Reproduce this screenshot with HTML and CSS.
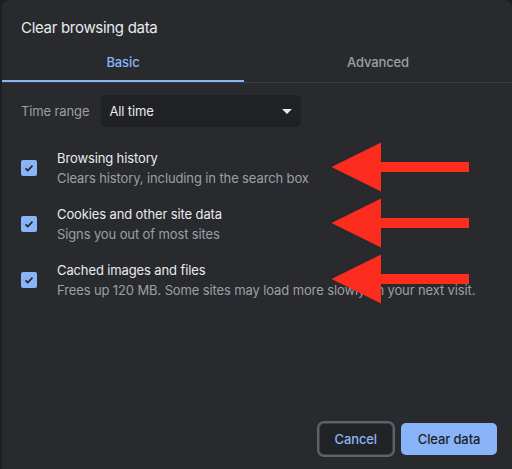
FILE: index.html
```html
<!DOCTYPE html>
<html lang="en">
<head>
    <meta charset="UTF-8">
    <meta name="viewport" content="width=device-width, initial-scale=1.0">
    <title>Clear browsing data</title>
    <link rel="stylesheet" href="styles.css">
</head>
<body>

<div class="dialog">
    <h1 class="dialog-title">Clear browsing data</h1>

    <!-- tabs -->
    <div class="tabs">
        <div class="tab active">Basic</div>
        <div class="tab">Advanced</div>
    </div>

    <!-- time range -->
    <div class="range-row">
        <span class="range-label">Time range</span>
        <div class="select">
            <span>All time</span>
            <span class="select-arrow"></span>
        </div>
    </div>

    <!-- data types -->
    <div class="options">
        <div class="option">
            <span class="checkbox">
                <svg width="16" height="16" viewBox="0 0 16 16"><path d="M4.5 8.3l2.3 2.2 4.7-4.9" fill="none" stroke="#202124" stroke-width="1.6"/></svg>
            </span>
            <div class="option-text">
                <div class="option-title">Browsing history</div>
                <div class="option-desc">Clears history, including in the search box</div>
            </div>
        </div>
        <div class="option">
            <span class="checkbox">
                <svg width="16" height="16" viewBox="0 0 16 16"><path d="M4.5 8.3l2.3 2.2 4.7-4.9" fill="none" stroke="#202124" stroke-width="1.6"/></svg>
            </span>
            <div class="option-text">
                <div class="option-title">Cookies and other site data</div>
                <div class="option-desc">Signs you out of most sites</div>
            </div>
        </div>
        <div class="option">
            <span class="checkbox">
                <svg width="16" height="16" viewBox="0 0 16 16"><path d="M4.5 8.3l2.3 2.2 4.7-4.9" fill="none" stroke="#202124" stroke-width="1.6"/></svg>
            </span>
            <div class="option-text">
                <div class="option-title">Cached images and files</div>
                <div class="option-desc">Frees up 120 MB. Some sites may load more slowly on your next visit.</div>
            </div>
        </div>
    </div>

    <div class="actions">
        <button class="btn btn-cancel">Cancel</button>
        <button class="btn btn-clear">Clear data</button>
    </div>

    <!-- red arrows pointing at the options -->
    <svg class="arrows" width="512" height="469" viewBox="0 0 512 469">
        <path d="M331.5 167L381 142.5V162H469V172H381V191.5Z" fill="#fc2c1e"/>
        <path d="M331.5 223L381 198.5V218H469V228H381V247.5Z" fill="#fc2c1e"/>
        <path d="M331.5 279L381 254.5V274H469V284H381V303.5Z" fill="#fc2c1e"/>
    </svg>
</div>

</body>
</html>
```

FILE: styles.css
```css
body {
    margin: 0;
    padding: 0;
    background-color: #1d1e21;
    font-family: Inter, "Noto Sans", sans-serif;
    font-size: 13px;
    letter-spacing: -0.12px;
    color: #e8eaed;
}

.dialog {
    position: relative;
    width: 510px;
    height: 469px;
    margin-left: 2px;
    background-color: #292a2d;
    border-radius: 8px 8px 0 0;
    display: flex;
    flex-direction: column;
}

.dialog-title {
    margin: 18px 0 0 19px;
    font-size: 15px;
    font-weight: 400;
    line-height: 20px;
    letter-spacing: -0.3px;
}

.tabs {
    display: flex;
    margin-top: 6px;
    border-bottom: 1px solid #3c3d40;
}

.tab {
    height: 36px;
    line-height: 36px;
    text-align: center;
    font-weight: 500;
    color: #9aa0a6;
    border-bottom: 2px solid transparent;
}

.tab.active {
    width: 242px;
    color: #8ab4f8;
    border-bottom-color: #8ab4f8;
}

.tab:last-child {
    flex: 1;
}

.range-row {
    display: flex;
    align-items: center;
    gap: 12px;
    margin: 12px 0 0 19px;
}

.range-label {
    color: #9aa0a6;
}

.select {
    width: 184px;
    height: 32px;
    padding: 0 8px;
    display: flex;
    align-items: center;
    justify-content: space-between;
    background-color: #202124;
    border-radius: 5px;
}

.select-arrow {
    width: 0;
    height: 0;
    margin-right: 1px;
    border-left: 5px solid transparent;
    border-right: 5px solid transparent;
    border-top: 5px solid #e8eaed;
}

.options {
    margin-top: 13px;
}

.option {
    display: flex;
    align-items: center;
    gap: 20px;
    padding: 8px 0 8px 19px;
}

.checkbox {
    width: 16px;
    height: 16px;
    background-color: #8ab4f8;
    border-radius: 2px;
}

.checkbox svg {
    display: block;
}

.option-title,
.option-desc {
    line-height: 20px;
}

.option-desc {
    color: #9aa0a6;
}

.actions {
    margin-top: auto;
    padding: 0 15px 14px 0;
    display: flex;
    justify-content: flex-end;
    gap: 8px;
}

.btn {
    height: 32px;
    padding: 0 15px;
    font-family: inherit;
    font-size: 13px;
    font-weight: 500;
    letter-spacing: -0.12px;
    border-radius: 5px;
    cursor: pointer;
}

.btn-cancel {
    background-color: #222326;
    color: #8ab4f8;
    border: 1px solid #3c4043;
    box-shadow: 0 0 0 2px #5b6270;
}

.btn-clear {
    width: 96px;
    background-color: #8ab4f8;
    color: #202124;
    border: none;
}

.arrows {
    position: absolute;
    left: -2px;
    top: 0;
    pointer-events: none;
}
```
